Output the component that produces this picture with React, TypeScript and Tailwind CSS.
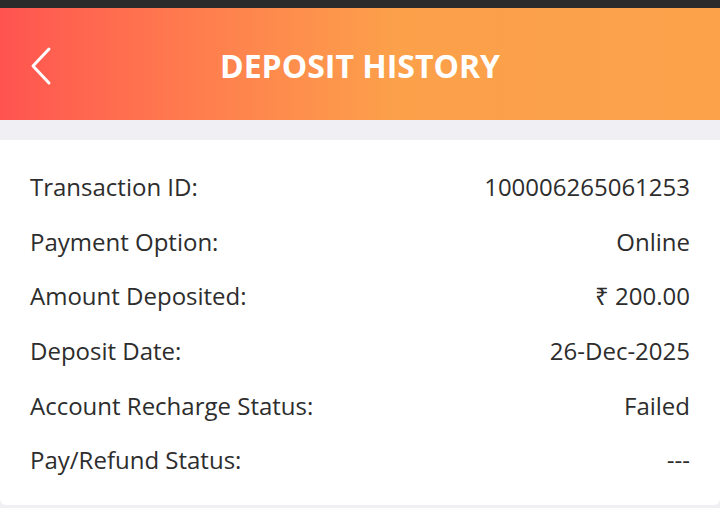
const rows: [string, string][] = [
  ["Transaction ID:", "100006265061253"],
  ["Payment Option:", "Online"],
  ["Amount Deposited:", "₹ 200.00"],
  ["Deposit Date:", "26-Dec-2025"],
  ["Account Recharge Status:", "Failed"],
  ["Pay/Refund Status:", "---"],
];

export default function App() {
  return (
    <div
      className="w-[720px] h-[508px] bg-[#efeff4] flex flex-col overflow-hidden"
      style={{ fontFamily: '"Open Sans", "Noto Sans", sans-serif' }}
    >
      <div className="h-[8px] bg-[#2b2b2b]" />
      <div className="h-[112px] flex items-center relative bg-gradient-to-r from-[#ff5350] via-[#fca04a] via-55% to-[#fba24b]">
        <button className="absolute left-[28px] top-[38px] text-white">
          <svg width="26" height="40" viewBox="0 0 26 40" fill="none">
            <path d="M21 3 L5 20 L21 37" stroke="white" strokeWidth="3" strokeLinecap="round" strokeLinejoin="round" />
          </svg>
        </button>
        <h1 className="w-full text-center text-white font-bold text-[32px] leading-none pt-[4px]">DEPOSIT HISTORY</h1>
      </div>
      <div className="h-[20px]" />
      <div className="h-[365px] bg-white rounded-b-[6px] px-[30px] pt-[20px] flex flex-col">
        {rows.map(([label, value]) => (
          <div key={label} className="h-[54.6px] flex items-center justify-between text-[24px] text-[#2d2d2d]">
            <span>{label}</span>
            <span>{value}</span>
          </div>
        ))}
      </div>
    </div>
  );
}
